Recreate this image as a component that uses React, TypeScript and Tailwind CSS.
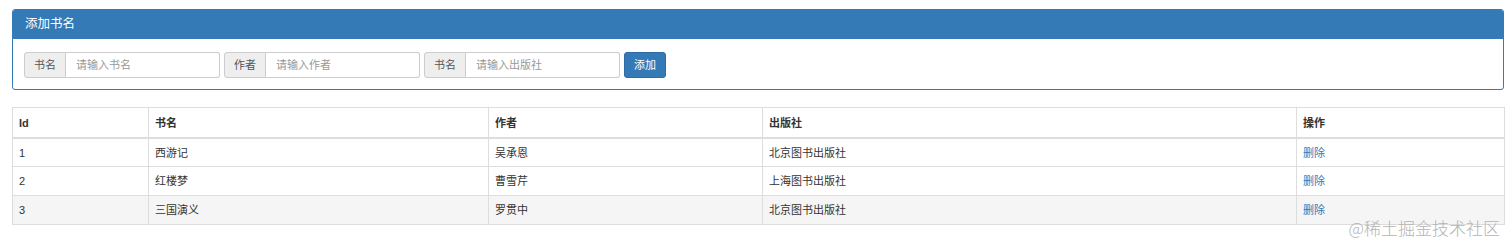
import React from "react";

const FONT = { fontFamily: '"Liberation Sans", "Noto Sans CJK SC", sans-serif' };

function InputGroup({ label, placeholder }: { label: string; placeholder: string }) {
  return (
    <div className="flex h-[26px] w-[196px]">
      <div className="flex w-[42px] shrink-0 items-center justify-center rounded-l-[3px] border border-[#ccc] bg-[#eee] text-[11px] text-[#555]">
        {label}
      </div>
      <input
        className="h-full w-[154px] rounded-r-[3px] border border-l-0 border-[#ccc] bg-white pl-[10px] text-[11px] text-[#555] outline-none placeholder:text-[#999]"
        placeholder={placeholder}
      />
    </div>
  );
}

const rows = [
  { id: "1", name: "西游记", author: "吴承恩", pub: "北京图书出版社", hover: false },
  { id: "2", name: "红楼梦", author: "曹雪芹", pub: "上海图书出版社", hover: false },
  { id: "3", name: "三国演义", author: "罗贯中", pub: "北京图书出版社", hover: true },
];

export default function App() {
  return (
    <div className="relative h-[249px] w-[1512px] bg-white text-[#333]" style={FONT}>
      <div className="pl-[12px] pt-[9px]">
        <div className="w-[1492px] overflow-hidden rounded-[3px] border border-[#337ab7]">
          <div className="flex h-[29px] items-center bg-[#337ab7] pl-[12px] text-[12.5px] text-white">添加书名</div>
          <div className="flex gap-[4px] pb-[11px] pl-[11px] pt-[13px]">
            <InputGroup label="书名" placeholder="请输入书名" />
            <InputGroup label="作者" placeholder="请输入作者" />
            <InputGroup label="书名" placeholder="请输入出版社" />
            <button className="h-[26px] w-[42px] rounded-[3px] border border-[#2e6da4] bg-[#337ab7] text-[11px] text-white">
              添加
            </button>
          </div>
        </div>

        <table className="mt-[17px] w-[1492px] table-fixed border-collapse border border-[#ddd] text-[11px]">
          <colgroup>
            <col className="w-[136px]" />
            <col className="w-[340px]" />
            <col className="w-[274px]" />
            <col className="w-[534px]" />
            <col className="w-[208px]" />
          </colgroup>
          <thead>
            <tr className="h-[30px] border-b-2 border-[#ddd]">
              {["Id", "书名", "作者", "出版社", "操作"].map((h) => (
                <th key={h} className="border-l border-[#ddd] px-[6px] pt-[1px] text-left font-bold text-[#333]">
                  {h}
                </th>
              ))}
            </tr>
          </thead>
          <tbody>
            {rows.map((r) => (
              <tr key={r.id} className={`h-[29px] border-t border-[#ddd] ${r.hover ? "bg-[#f5f5f5]" : "bg-white"}`}>
                <td className="border-l border-[#ddd] px-[6px] pt-[1px]">{r.id}</td>
                <td className="border-l border-[#ddd] px-[6px] pt-[1px]">{r.name}</td>
                <td className="border-l border-[#ddd] px-[6px] pt-[1px]">{r.author}</td>
                <td className="border-l border-[#ddd] px-[6px] pt-[1px]">{r.pub}</td>
                <td className="border-l border-[#ddd] px-[6px] pt-[1px] text-[#337ab7]">删除</td>
              </tr>
            ))}
          </tbody>
        </table>
      </div>

      <div
        className="absolute right-[12px] top-[219px] text-[17px] leading-none text-[#b4b4b4]"
        style={{ fontFamily: '"Noto Sans CJK SC", sans-serif', fontWeight: 300 }}
      >
        @稀土掘金技术社区
      </div>
    </div>
  );
}
